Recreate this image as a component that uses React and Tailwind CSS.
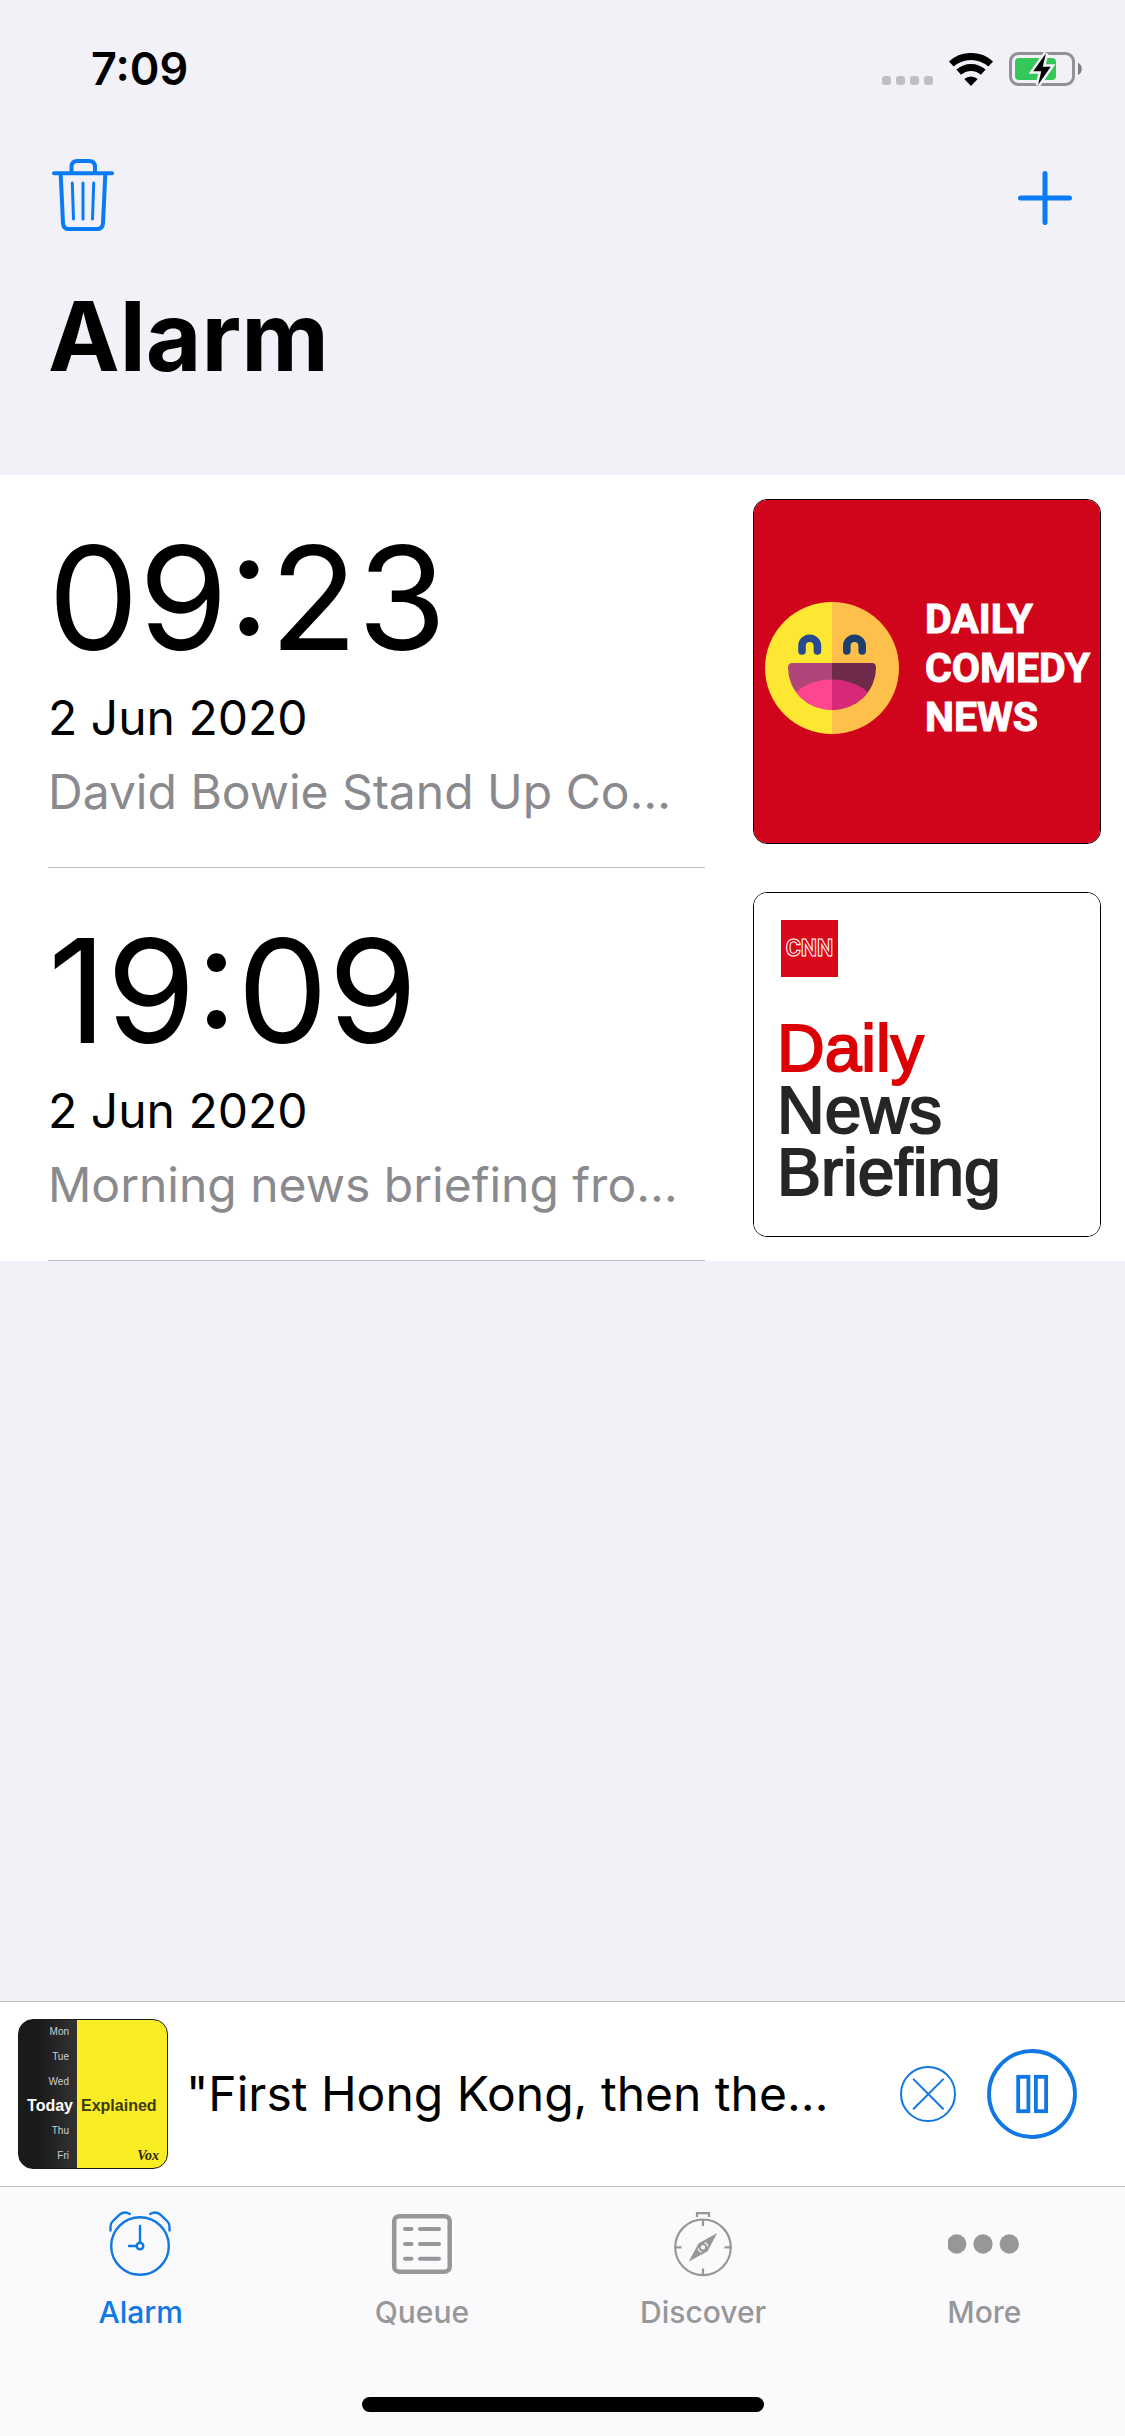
import React, { useState } from "react";
import clsx from "clsx";

const alarms = [
  {
    id: 1,
    time: "09:23",
    date: "2 Jun 2020",
    episode: "David Bowie Stand Up Co…",
    artwork: "comedy",
  },
  {
    id: 2,
    time: "19:09",
    date: "2 Jun 2020",
    episode: "Morning news briefing fro…",
    artwork: "briefing",
  },
];

const WifiIcon = () => (
  <svg width="46" height="33" viewBox="0 0 46 33" fill="none">
    <path d="M3.3 11A29.5 29.5 0 0 1 42.7 11" stroke="#000" strokeWidth="7" />
    <path d="M10.7 19.2A18.5 18.5 0 0 1 35.3 19.2" stroke="#000" strokeWidth="7" />
    <path d="M23 33L16.3 26A10 10 0 0 1 29.7 26Z" fill="#000" />
  </svg>
);

const BatteryIcon = () => (
  <svg width="74" height="34" viewBox="0 0 74 34" fill="none">
    <rect x="1.5" y="1.5" width="63" height="31" rx="8" stroke="#929296" strokeWidth="3" />
    <rect x="6" y="6" width="41" height="22" rx="4" fill="#34c759" />
    <path d="M69 10.7C74 12.5 74 21.2 69 23Z" fill="#7e7e82" />
    <path
      d="M37 1.3L24.3 19.3H32.3L29 33L41.7 14.7H33.7Z"
      fill="#000"
      stroke="#f2f1f7"
      strokeWidth="5"
      paintOrder="stroke"
    />
  </svg>
);

const TrashIcon = () => (
  <svg
    width="62"
    height="72"
    viewBox="0 0 62 72"
    fill="none"
    stroke="currentColor"
    strokeWidth="4"
    strokeLinecap="round"
    strokeLinejoin="round"
  >
    <path d="M2 14.3H60" />
    <path d="M19.5 14V8Q19.5 2 25.5 2H37Q43 2 43 8V14" />
    <path d="M8.7 15L11 64.5Q11.4 70 17 70H45Q50.6 70 51 64.5L53.3 15" />
    <path d="M20.3 24L21.5 60M31 24V60M41.7 24L40.5 60" strokeWidth="3" />
  </svg>
);

const PlusIcon = () => (
  <svg width="54" height="54" viewBox="0 0 54 54" stroke="currentColor" strokeWidth="5" strokeLinecap="round">
    <path d="M27 2.5V51.5M2.5 27H51.5" />
  </svg>
);

const AlarmIcon = () => (
  <svg width="72" height="66" viewBox="-2 0 72 66" fill="none" stroke="currentColor" strokeWidth="2.4" strokeLinecap="round">
    <circle cx="33" cy="35" r="28.8" />
    <circle cx="33" cy="35" r="3.3" />
    <path d="M33 31.5V15M29.5 35H22" />
    <path d="M3.5 19.5V15.5Q3.5 12.5 5.5 10.5L12.8 3.5Q17.5 -0.2 22.8 3" />
    <path d="M62.5 19.5V15.5Q62.5 12.5 60.5 10.5L53.2 3.5Q48.5 -0.2 43.2 3" />
  </svg>
);

const QueueIcon = () => (
  <svg width="72" height="66" viewBox="-3 0 72 66" fill="none" stroke="currentColor" strokeLinecap="round">
    <rect x="5.2" y="5.2" width="55.5" height="55.5" rx="5" strokeWidth="4.5" />
    <path
      d="M16 18H22.5M31 18H50M16 33H22.5M31 33H50M16 47.7H22.5M31 47.7H50"
      strokeWidth="4"
    />
  </svg>
);

const DiscoverIcon = () => (
  <svg width="72" height="66" viewBox="-3 0 72 66" fill="none" stroke="currentColor" strokeWidth="2.2">
    <circle cx="33" cy="36.3" r="27.8" />
    <path d="M27 6V2.2H39V6" />
    <path d="M33 8.5V15M33 57.5V64M5 36.3H11.5M54.5 36.3H61" />
    <path d="M44.5 24.8L36.8 39.4L21.5 47.8L29.2 33.2Z" />
    <path d="M46 23.3L35.5 31L38.5 34ZM20 49.3L30.5 41.6L27.5 38.6Z" fill="currentColor" stroke="none" />
    <circle cx="33" cy="36.3" r="3.3" />
  </svg>
);

const MoreIcon = () => (
  <svg width="72" height="66" viewBox="-2 0 72 66" fill="currentColor">
    <circle cx="6.7" cy="33" r="9.7" />
    <circle cx="33" cy="33" r="9.7" />
    <circle cx="59.3" cy="33" r="9.7" />
  </svg>
);

const CloseIcon = () => (
  <svg width="56" height="56" viewBox="0 0 56 56" fill="none" stroke="currentColor" strokeWidth="2" strokeLinecap="round">
    <circle cx="28" cy="28" r="27" />
    <path d="M13.7 13.4L43 42.7M43 13.4L13.7 42.7" />
  </svg>
);

const PauseIcon = () => (
  <svg width="90" height="90" viewBox="0 0 90 90" fill="none" stroke="currentColor" strokeWidth="3.8">
    <circle cx="45" cy="45" r="43" />
    <rect x="31.2" y="27.8" width="10.2" height="34.4" />
    <rect x="48.9" y="27.8" width="10.2" height="34.4" />
  </svg>
);

const LaughIcon = () => (
  <svg className="shrink-0" width="134" height="132" viewBox="0 0 134 132" fill="none">
    <defs>
      <clipPath id="mouth">
        <path d="M27 61H107Q111 61 111 66A44 42 0 0 1 23 66Q23 61 27 61Z" />
      </clipPath>
    </defs>
    <path d="M67 0A67 66 0 0 0 67 132Z" fill="#fee733" />
    <path d="M67 0A67 66 0 0 1 67 132Z" fill="#fec04b" />
    <path d="M37 49V44A7.7 7.7 0 0 1 52.4 44V49" stroke="#27498f" strokeWidth="7.6" strokeLinecap="round" />
    <path d="M81.8 49V44A7.7 7.7 0 0 1 97.2 44V49" stroke="#1e3f6e" strokeWidth="7.6" strokeLinecap="round" />
    <g clipPath="url(#mouth)">
      <rect x="20" y="58" width="47" height="54" fill="#b0457a" />
      <rect x="67" y="58" width="47" height="54" fill="#6e2a4a" />
      <path d="M67 77.5A45 32 0 0 0 22 110H67Z" fill="#ff4590" />
      <path d="M67 77.5A45 32 0 0 1 112 110H67Z" fill="#d62a78" />
    </g>
  </svg>
);

const ComedyArtwork = () => (
  <div className="flex h-full items-center gap-[26px] bg-[#d0051b] pb-[7px] pl-[11px]">
    <LaughIcon />
    <p className="font-['Roboto',sans-serif] text-[41px] leading-[49px] font-bold text-white [-webkit-text-stroke:1px]">
      DAILY
      <br />
      COMEDY
      <br />
      NEWS
    </p>
  </div>
);

const BriefingArtwork = () => (
  <div className="flex h-full flex-col gap-10 bg-white pt-[27px] pl-[23px]">
    <div className="ml-1 flex size-[57px] items-center justify-center bg-[#d9081b] font-['Roboto',sans-serif] text-[23px] leading-none font-bold text-[#d9081b] [-webkit-text-stroke:1px_white]">
      CNN
    </div>
    <p className="font-['Liberation_Sans',sans-serif] text-[66px] leading-[62px] text-[#262626] [-webkit-text-stroke:2px]">
      <span className="text-[#dc0005]">Daily</span>
      <br />
      News
      <br />
      Briefing
    </p>
  </div>
);

const TodayArtwork = () => (
  <div className="grid size-[150px] shrink-0 grid-cols-[58px_1fr] grid-rows-6 items-center overflow-hidden rounded-[15px] border border-[#1a1a1a] bg-[linear-gradient(to_right,#1a1a1a_20px,#333_58px,#faed24_58px)] font-['Liberation_Sans',sans-serif] text-[10px] leading-none text-[#d0d0d0]">
    <span className="col-start-1 pr-2 text-right">Mon</span>
    <span className="col-start-1 pr-2 text-right">Tue</span>
    <span className="col-start-1 pr-2 text-right">Wed</span>
    <span className="col-start-1 pr-1 text-right text-[16px] font-bold text-white">Today</span>
    <span className="pl-1 text-[16px] font-bold text-[#3c3a10]">Explained</span>
    <span className="col-start-1 pr-2 text-right">Thu</span>
    <span className="col-start-1 pr-2 text-right">Fri</span>
    <span className="pr-2 text-right font-['Liberation_Serif',serif] text-[14px] font-bold text-[#2c2a10] italic">
      Vox
    </span>
  </div>
);

const artworks = {
  comedy: <ComedyArtwork />,
  briefing: <BriefingArtwork />,
};

const tabs = [
  { key: "alarm", label: "Alarm", icon: <AlarmIcon /> },
  { key: "queue", label: "Queue", icon: <QueueIcon /> },
  { key: "discover", label: "Discover", icon: <DiscoverIcon /> },
  { key: "more", label: "More", icon: <MoreIcon /> },
];

const StatusBar = () => (
  <div className="flex h-[138px] items-center justify-between pr-[42px] pl-[91px]">
    <span className="text-[45px] font-semibold">7:09</span>
    <div className="flex items-center gap-[15px]">
      <div className="flex gap-[5px] pt-[22px]">
        <span className="size-[9px] rounded-[3px] bg-[#bfbfc3]" />
        <span className="size-[9px] rounded-[3px] bg-[#bfbfc3]" />
        <span className="size-[9px] rounded-[3px] bg-[#bfbfc3]" />
        <span className="size-[9px] rounded-[3px] bg-[#bfbfc3]" />
      </div>
      <WifiIcon />
      <BatteryIcon />
    </div>
  </div>
);

const AlarmRow = ({ alarm }) => (
  <li className="flex gap-12 pr-6 pl-12">
    <div className="min-w-0 flex-1 border-b border-[#c0c0c3] pt-10 pb-[38px]">
      <p className="text-[144px] leading-[166px]">{alarm.time}</p>
      <p className="text-[48px] leading-[74px]">{alarm.date}</p>
      <p className="truncate text-[48px] leading-[74px] text-[#8a8a8e]">{alarm.episode}</p>
    </div>
    <div className="my-6 w-[348px] shrink-0 overflow-hidden rounded-[14px] border border-black">
      {artworks[alarm.artwork]}
    </div>
  </li>
);

const App = () => {
  const [activeTab, setActiveTab] = useState("alarm");

  return (
    <div className="flex min-h-screen flex-col bg-[#f2f1f7] font-['Inter',sans-serif] text-black">
      <StatusBar />

      <header>
        <div className="flex h-[120px] items-center justify-between pr-[53px] pl-[52px] text-[#0a7af5]">
          <button type="button" aria-label="Delete alarms" className="pb-1.5">
            <TrashIcon />
          </button>
          <button type="button" aria-label="Add alarm">
            <PlusIcon />
          </button>
        </div>
        <h1 className="px-12 pb-[61px] text-[96px] leading-[156px] font-bold">Alarm</h1>
      </header>

      <main className="flex-1">
        <ul className="bg-white">
          {alarms.map((alarm) => (
            <AlarmRow key={alarm.id} alarm={alarm} />
          ))}
        </ul>
      </main>

      {/* Now playing */}
      <section className="flex items-center border-t border-[#bfbfc2] bg-white py-[17px] pr-12 pl-[18px]">
        <TodayArtwork />
        <p className="min-w-0 flex-1 truncate pl-[18px] text-[48px] leading-[74px]">
          &quot;First Hong Kong, then the…
        </p>
        <div className="flex shrink-0 items-center gap-[31px] text-[#1177e2]">
          <button type="button" aria-label="Close player">
            <CloseIcon />
          </button>
          <button type="button" aria-label="Pause">
            <PauseIcon />
          </button>
        </div>
      </section>

      {/* Tab bar */}
      <footer className="border-t border-[#bfbfc2] bg-[#fafafc] pt-6 pb-6">
        <nav className="grid grid-cols-4">
          {tabs.map((tab) => (
            <button
              key={tab.key}
              type="button"
              onClick={() => setActiveTab(tab.key)}
              className={clsx(
                "flex flex-col items-center gap-[15px] text-[30px] leading-[40px] font-medium",
                activeTab === tab.key ? "text-[#1177e2]" : "text-[#97979a]"
              )}
            >
              {tab.icon}
              {tab.label}
            </button>
          ))}
        </nav>
        <div className="mx-auto mt-[65px] h-[15px] w-[402px] rounded-full bg-black" />
      </footer>
    </div>
  );
};

export default App;
